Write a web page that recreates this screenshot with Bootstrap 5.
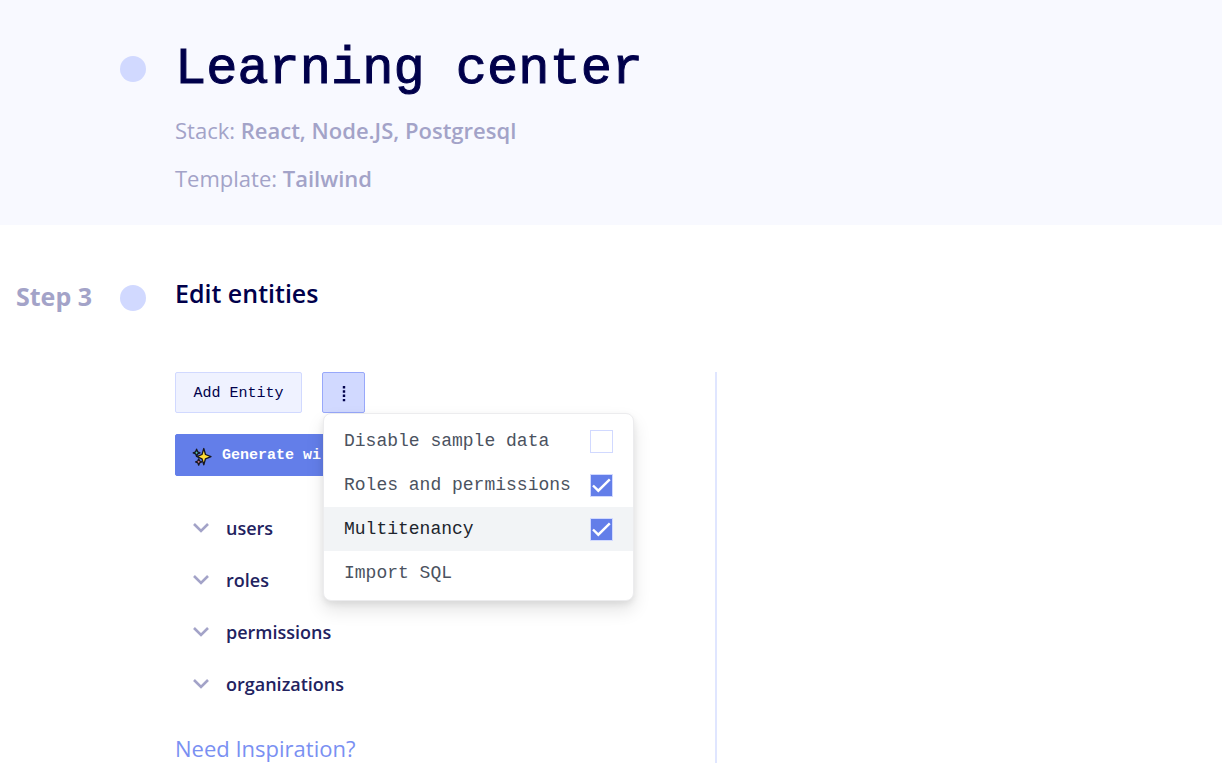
<!DOCTYPE html>
<html lang="en">
<head>
<meta charset="utf-8">
<meta name="viewport" content="width=device-width, initial-scale=1">
<title>Learning center</title>
<link href="https://cdn.jsdelivr.net/npm/bootstrap@5.3.0/dist/css/bootstrap.min.css" rel="stylesheet">
<style>
  :root { --ink: #00004b; --muted: #a3a3c8; --soft: #d1d9ff; --accent: #637ee9; }
  body { font-family: "Open Sans", sans-serif; color: var(--ink); background: #fff; }
  .mono-text { font-family: "Liberation Mono", monospace; }
  .step-row { display: grid; grid-template-columns: 104px 26px minmax(0, 1fr); padding-left: 16px; }
  .step-body { padding-left: 29px; }
  .dot { width: 26px; height: 26px; background: var(--soft); }
  .hero { background: #f8f9ff; padding-top: 34px; padding-bottom: 23px; }
  .hero .dot { margin-top: 22px; }
  .hero h1 { font-size: 52px; line-height: 72px; font-weight: 400; -webkit-text-stroke: 1px var(--ink); }
  .hero p { font-size: 22px; line-height: 48px; color: var(--muted); }
  .hero strong { font-weight: 600; }
  .step-head { padding-top: 50px; }
  .step-head .dot { margin-top: 10px; }
  .step-head h2, .step-label { font-size: 25px; line-height: 36px; font-weight: 600; }
  .step-label { color: var(--muted); line-height: 42px; font-weight: 700; }
  .panel { max-width: 542px; border-right: 2px solid #e0e6ff; margin-top: 55px; margin-bottom: 8px; }
  .tool-btn { --bs-btn-border-radius: 2px; --bs-btn-padding-y: 0; --bs-btn-padding-x: 16px; --bs-btn-font-size: 15px; --bs-btn-color: var(--ink); --bs-btn-bg: #eff2ff; --bs-btn-border-color: var(--soft); --bs-btn-hover-color: var(--ink); --bs-btn-hover-bg: var(--soft); --bs-btn-hover-border-color: #a3b1fa; height: 41px; padding-top: 3px; }
  .add-btn { min-width: 127px; }
  .more-btn { --bs-btn-padding-x: 0; --bs-btn-bg: var(--soft); --bs-btn-border-color: #98a8fa; width: 43px; }
  .gen-btn { --bs-btn-bg: var(--accent); --bs-btn-color: #fff; --bs-btn-border-color: var(--accent); --bs-btn-hover-bg: var(--accent); --bs-btn-hover-color: #fff; font-weight: 700; height: 42px; min-width: 234px; gap: 10px; margin-top: 21px; }
  .options { position: absolute; z-index: 10; top: 100%; left: 1px; width: 311px; padding: 5px 0; border: 1px solid #ececee; border-radius: 8px; background: #fff; box-shadow: 0 9px 18px rgba(0,0,0,.11), 0 3px 6px rgba(0,0,0,.07); color: #4b5260; }
  .option { height: 44px; padding: 0 20px; color: inherit; font-size: 18px; white-space: nowrap; }
  .option-active { background: #f2f4f6; color: #20242c; }
  .option .form-check-input { width: 23px; height: 23px; margin: 0; border: 1px solid var(--soft); border-radius: 0; background-color: #fff; }
  .option .form-check-input:checked { background-color: var(--accent); background-size: 21px 21px; background-image: url("data:image/svg+xml,%3csvg xmlns='http://www.w3.org/2000/svg' viewBox='0 0 21 21'%3e%3cpath fill='none' stroke='%23fff' stroke-width='2.4' d='M2 10.500l5.300 5.200L18.800 4.300'/%3e%3c/svg%3e"); }
  .entities { padding-top: 26px; }
  .entity { height: 52px; padding: 0 18px; font-size: 18px; font-weight: 600; color: #22225f; }
  .inspire { font-size: 22px; line-height: 26px; color: #7a90f2; margin-top: 25px; }
</style>
</head>
<body>
<header class="hero step-row">
  <span></span>
  <span class="dot rounded-circle"></span>
  <div class="step-body">
    <h1 class="mono-text m-0">Learning center</h1>
    <p class="m-0">Stack: <strong>React, Node.JS, Postgresql</strong></p>
    <p class="m-0">Template: <strong>Tailwind</strong></p>
  </div>
</header>
<main>
  <div class="step-head step-row">
    <div class="step-label">Step 3</div>
    <span class="dot rounded-circle"></span>
    <div class="step-body"><h2 class="m-0">Edit entities</h2></div>
  </div>
  <section class="step-row">
    <span></span><span></span>
    <div class="step-body">
      <div class="panel">
        <div class="d-flex">
          <button type="button" class="btn tool-btn add-btn mono-text me-3">Add Entity</button>
          <div class="position-relative ms-1">
            <button type="button" class="btn tool-btn more-btn d-flex align-items-center justify-content-center" aria-label="More options" aria-expanded="true">
              <svg width="4" height="18" viewBox="0 0 4 18" fill="#00004b" aria-hidden="true"><path d="M.8 1h2.400v2.400H.8zM.8 5.300h2.400v2.400H.8zM.8 9.600h2.400v2.400H.8zM.8 13.900h2.400v2.400H.8z"/></svg>
            </button>
            <div class="options mono-text">
              <label class="option d-flex align-items-center justify-content-between">Disable sample data <input class="form-check-input" type="checkbox"></label>
              <label class="option d-flex align-items-center justify-content-between">Roles and permissions <input class="form-check-input" type="checkbox" checked></label>
              <label class="option option-active d-flex align-items-center justify-content-between">Multitenancy <input class="form-check-input" type="checkbox" checked></label>
              <button type="button" class="option btn border-0 w-100 text-start">Import SQL</button>
            </div>
          </div>
        </div>
        <button type="button" class="btn tool-btn gen-btn mono-text d-flex align-items-center">
          <svg width="20" height="20" viewBox="0 0 20 20" stroke="#17171f" stroke-width="1.300" stroke-linejoin="round" aria-hidden="true"><path fill="#54c5b4" d="M4.600 2.200l1 2.600 2.400 1-2.400 1-1 2.600-1-2.600-2.400-1 2.400-1z"/><path fill="#ffdd35" d="M11.800 1.500l1.700 6 5.500 2.100-5.500 2.200-1.700 6-1.800-6-5-2.200 5-2.100z"/><path fill="#f18aa0" d="M6.700 11.800l.9 2.200 2.200.9-2.200.9-.9 2.400-.9-2.400-2.200-.9 2.200-.9z"/></svg>
          Generate wi
        </button>
        <ul class="entities list-unstyled m-0">
          <li class="entity d-flex align-items-center"><svg class="me-3" width="17" height="16" viewBox="0 0 17 16" fill="none" stroke="#a3a3c8" stroke-width="2.600" aria-hidden="true"><path d="M1 4l7 7 7-7"/></svg>users</li>
          <li class="entity d-flex align-items-center"><svg class="me-3" width="17" height="16" viewBox="0 0 17 16" fill="none" stroke="#a3a3c8" stroke-width="2.600" aria-hidden="true"><path d="M1 4l7 7 7-7"/></svg>roles</li>
          <li class="entity d-flex align-items-center"><svg class="me-3" width="17" height="16" viewBox="0 0 17 16" fill="none" stroke="#a3a3c8" stroke-width="2.600" aria-hidden="true"><path d="M1 4l7 7 7-7"/></svg>permissions</li>
          <li class="entity d-flex align-items-center"><svg class="me-3" width="17" height="16" viewBox="0 0 17 16" fill="none" stroke="#a3a3c8" stroke-width="2.600" aria-hidden="true"><path d="M1 4l7 7 7-7"/></svg>organizations</li>
        </ul>
        <a href="#" class="inspire d-inline-block text-decoration-none">Need Inspiration?</a>
      </div>
    </div>
  </section>
</main>
<script src="https://cdn.jsdelivr.net/npm/bootstrap@5.3.0/dist/js/bootstrap.bundle.min.js"></script>
</body>
</html>
